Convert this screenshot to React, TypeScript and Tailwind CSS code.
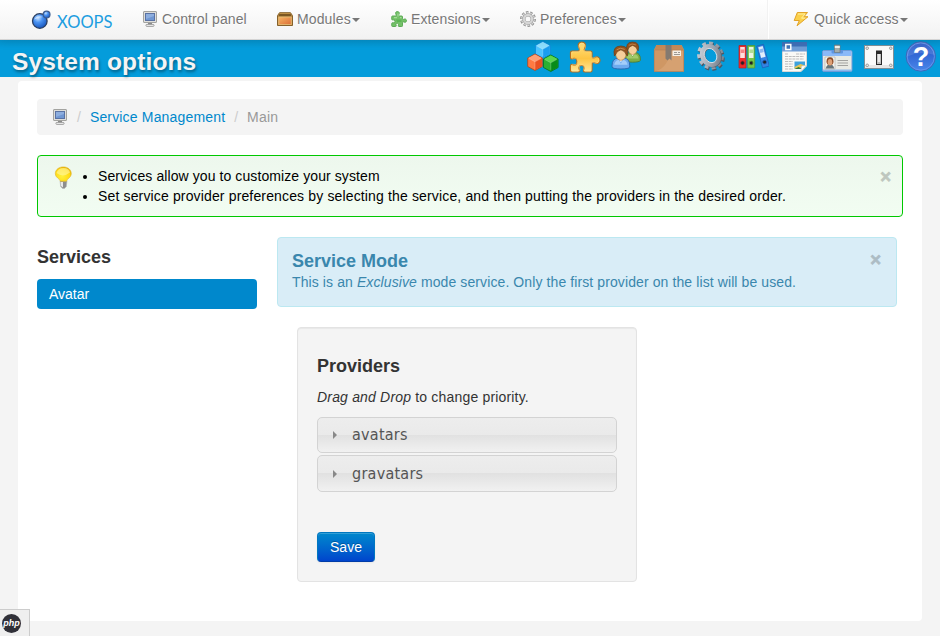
import React from "react";

function Monitor() {
  return (
    <svg width="16" height="16" viewBox="0 0 16 16" className="block">
      <rect x="1.500" y=".5" width="13" height="11" rx=".5" fill="#dededb" stroke="#a3a3a0" />
      <rect x="3.500" y="2.500" width="9" height="7" fill="#6f97d3" stroke="#5a72a3" />
      <path d="M4 3h8v2L4 8z" fill="#9ab8e4" opacity=".7" />
      <path d="M6 12h4v1.500H6z" fill="#8a8a8a" />
      <rect x="3.900" y="13.400" width="8.200" height="2" rx="1" fill="#eee" stroke="#8d8d8d" strokeWidth=".8" />
    </svg>
  );
}

const puzzlePath =
  "M1.500 11.500Q1.500 10 3 10h6q2.300-.3 1.200-2.500C8 4 9.500 1 12.800 1s5 3 2.800 6.500Q14.500 9.800 17 10h4.500Q23 10 23 11.500v4q.2 2.200 2.300 1.200C28.500 15 31 16.500 31 19.300s-2.500 4.200-5.700 2.500q-2.100-1-2.300 1.200v6.500q0 1.500-1.500 1.500H16q-2.300-.3-1.300-2.500c1-2.200 0-4-2.200-4s-3.200 1.800-2.200 4Q11.300 30.700 9 31H3q-1.500 0-1.500-1.500V25q.2-2.200 2.300-1.300 4.200 1.200 4.200-3t-4.200-3Q1.700 18.700 1.500 16.500z";

function GoldPuzzle() {
  return (
    <svg width="32" height="32" viewBox="0 0 32 32" className="block">
      <defs>
        <linearGradient id="gold" x1="0" y1="0" x2="0" y2="1">
          <stop offset="0" stopColor="#ffe27f" />
          <stop offset=".55" stopColor="#fdc544" />
          <stop offset="1" stopColor="#ffe79a" />
        </linearGradient>
      </defs>
      <path d={puzzlePath} fill="url(#gold)" stroke="#b5701e" strokeWidth="1.200" />
      <path d={puzzlePath} fill="none" stroke="#fff0b5" strokeWidth=".8" transform="translate(1.300 1.500) scale(.92)" opacity=".5" />
    </svg>
  );
}

function GreenPuzzle() {
  return (
    <svg width="16" height="16" viewBox="0 0 32 32" className="block">
      <path d={puzzlePath} fill="#74c168" stroke="#5cab56" strokeWidth="2" />
      <path d="M6 13h6m2-8v6m4 2h3" fill="none" stroke="#a3da97" strokeWidth="2.500" />
      <path d="M10 17h11v5H12z" fill="#5cb554" />
    </svg>
  );
}

function ModuleBox() {
  return (
    <svg width="16" height="16" viewBox="0 0 16 16" className="block">
      <defs>
        <linearGradient id="crate" x1="0" y1="0" x2="1" y2="1">
          <stop offset="0" stopColor="#f6b463" />
          <stop offset="1" stopColor="#dc6e38" />
        </linearGradient>
      </defs>
      <path d="M2.500 1.700h11l2 3v9.800H.5V4.700z" fill="#c99849" stroke="#85602b" />
      <path d="M2.300 3h11.400l1 2.500H1.300z" fill="#7c5722" />
      <rect x="1.800" y="6" width="12.400" height="7.500" fill="url(#crate)" stroke="#e5bd79" strokeWidth=".8" />
    </svg>
  );
}

function NavGear() {
  return (
    <svg width="16" height="16" viewBox="0 0 16 16" className="block">
      <circle cx="8" cy="8" r="6.600" fill="none" stroke="#8f8f8f" strokeWidth="2.600" pathLength="20" strokeDasharray="1.200 .8" />
      <circle cx="8" cy="8" r="6.100" fill="none" stroke="#d2d2d2" strokeWidth="2" pathLength="20" strokeDasharray=".8 1.200" strokeDashoffset="-.2" />
      <circle cx="8" cy="8" r="4.100" fill="none" stroke="#9d9d9d" strokeWidth="3.200" />
      <circle cx="8" cy="8" r="4.100" fill="none" stroke="#d6d6d6" strokeWidth="2.200" />
    </svg>
  );
}

function Bolt() {
  return (
    <svg width="16" height="16" viewBox="0 0 16 16" className="-ml-px mr-px block">
      <path d="M4.300 1.500h10.200L11 5.700h4L4 14.800l2.300-5.300H1.200z" fill="#fbd04a" stroke="#e2a32a" strokeLinejoin="round" />
      <path d="M5 3h7L8.500 7.200h3.700" fill="none" stroke="#fff0a0" />
    </svg>
  );
}

function Logo() {
  return (
    <div className="flex h-5 w-[82px] items-center">
      <svg width="20" height="20" viewBox="0 0 20 20" className="block shrink-0">
        <defs>
          <radialGradient id="orb" cx=".38" cy=".3" r=".75">
            <stop offset="0" stopColor="#c4e0ff" />
            <stop offset=".4" stopColor="#4a93f2" />
            <stop offset="1" stopColor="#1450b8" />
          </radialGradient>
        </defs>
        <circle cx="8.800" cy="11" r="7.300" fill="url(#orb)" stroke="#2b3f60" strokeWidth="1.300" />
        <path d="M3 9.500Q6 4.500 12 7 8 7 3 9.500" fill="#d7e9ff" opacity=".7" />
        <circle cx="15.600" cy="4.600" r="3.400" fill="url(#orb)" stroke="#3b5c90" strokeWidth="1.200" />
      </svg>
      <div className="mt-[3px] ml-[6px] text-[17px] leading-5 text-[#1c9de0]" style={{ fontFamily: "Lato, sans-serif" }}>
        <span className="inline-block origin-left scale-x-[0.97]">XOOPS</span>
      </div>
    </div>
  );
}

function Caret() {
  return <span className="mt-[1px] ml-[1.500px] h-0 w-0 border-x-4 border-t-4 border-x-transparent border-t-[#777]" />;
}

function NavItem({ icon, label, caret = true }: { icon: React.ReactNode; label: string; caret?: boolean }) {
  return (
    <div className="flex h-5 items-center tracking-[0.12px] text-[#777] [text-shadow:0_1px_0_#fff]">
      {icon}
      <span className="ml-1 whitespace-nowrap">{label}</span>
      {caret && <Caret />}
    </div>
  );
}

function Cubes() {
  const cube = (x: number, y: number, top: string, left: string, right: string, edge: string) => (
    <g transform={`translate(${x} ${y})`}>
      <path d="M8 .5l7.300 4v8.500l-7.300 4-7.300-4V4.500z" fill={left} stroke={edge} strokeWidth=".8" strokeLinejoin="round" />
      <path d="M8 .9l6.700 3.700L8 8.300 1.300 4.600z" fill={top} />
      <path d="M8 8.300l6.900-3.700v8.200L8 16.600z" fill={right} />
      <path d="M2 5l6 3.300L14 5M8 8.300v7" fill="none" stroke="#fff" opacity=".3" strokeWidth=".8" />
    </g>
  );
  return (
    <svg width="32" height="32" viewBox="0 0 32 32" className="block">
      {cube(7.800, 0, "#8fe0ff", "#4cc4ff", "#1a9df0", "#1288dc")}
      {cube(0, 12.500, "#ffa077", "#ff7a42", "#ea5122", "#b3441c")}
      {cube(15.800, 13.500, "#5bd64d", "#2bb032", "#088c18", "#066e16")}
    </svg>
  );
}

function Users() {
  const person = (x: number, y: number, s: number, shirt: string, light: string, edge: string) => (
    <g transform={`translate(${x} ${y}) scale(${s})`}>
      <path d="M.8 20.500q0-6.500 6-7.500h6.400q6 1 6 7.500v2q-1 2-9.200 2t-9.200-2z" fill={shirt} stroke={edge} />
      <path d="M3 20q1-5 5-5l2 4 2-4q4 0 5 5z" fill={light} opacity=".7" />
      <path d="M7.500 13l2.500 4.500L12.500 13z" fill="#fff" />
      <path d="M4.800 6q0-4 5.200-4t5.200 4v5q-1.700 4.500-5.200 4.500T4.800 11z" fill="#f6cf9b" stroke="#b07838" strokeWidth=".6" />
      <path d="M3.300 11Q.8.500 10 .5t6.700 10.500L15 8.500q-.5-2.500-5-4-4.500 1.500-5 4z" fill="#94541f" stroke="#6d3b12" strokeWidth=".7" />
      <path d="M5.500 4.500Q9 1.500 14 4" stroke="#c98b50" fill="none" />
    </g>
  );
  return (
    <svg width="32" height="32" viewBox="0 0 32 32" className="block overflow-visible">
      {person(13.200, .6, .84, "#7fae46", "#b1d67c", "#4d7a2c")}
      {person(.3, 4.500, .96, "#6fabef", "#b9dbff", "#2b67b0")}
    </svg>
  );
}

function Package() {
  return (
    <svg width="32" height="32" viewBox="0 0 32 32" className="block">
      <path d="M3.500 4h25L31 9v21.500H1V9z" fill="#d39a67" />
      <path d="M3.500 4h25L31 9H1z" fill="#c48a58" />
      <path d="M1.400 9h29.200v21.500H1.400z" fill="#cf9764" stroke="#b5825a" strokeWidth=".7" />
      <path d="M3 30Q14 27 18 10h12v20z" fill="#deac7e" opacity=".5" />
      <path d="M12.500 4h6v15.500l-2-2-2 2-2-2z" fill="#857a70" />
      <path d="M19.500 9.500h8.500v5.500h-8.500z" fill="#f4eee5" />
      <path d="M21 11.500h3m-3 2h6m-2-2h2" stroke="#9c9891" />
    </svg>
  );
}

function BigGear() {
  return (
    <svg width="32" height="32" viewBox="0 0 32 32" className="block">
      <defs>
        <linearGradient id="steel" x1="0" y1="0" x2="1" y2="1">
          <stop offset="0" stopColor="#c9d0d9" />
          <stop offset=".5" stopColor="#a3abb6" />
          <stop offset="1" stopColor="#737b87" />
        </linearGradient>
      </defs>
      <g transform="translate(2 1.300)">
        <ellipse cx="14.300" cy="14.500" rx="11.300" ry="12.600" fill="none" stroke="#4f5763" strokeWidth="3.600" pathLength="22" strokeDasharray="1.100 .9" transform="rotate(-30 14.300 14.500)" />
      </g>
      <g transform="translate(.5 0) rotate(-30 15 14.500)">
        <ellipse cx="15" cy="14.500" rx="11.300" ry="12.600" fill="none" stroke="url(#steel)" strokeWidth="3.600" pathLength="22" strokeDasharray="1.100 .9" />
        <ellipse cx="15.500" cy="15.300" rx="8" ry="9.500" fill="none" stroke="#5d6571" strokeWidth="4.600" />
        <ellipse cx="15" cy="14.500" rx="8.200" ry="9.700" fill="none" stroke="url(#steel)" strokeWidth="4.200" />
        <ellipse cx="15" cy="14.500" rx="5.900" ry="7.500" fill="none" stroke="#e6ebf0" strokeWidth=".8" />
      </g>
    </svg>
  );
}

function Binders() {
  const binder = (x: number, color: string, dark: string, rotate = 0) => (
    <g transform={`translate(${x} 4) rotate(${rotate} 3 0)`}>
      <path d="M.5.5h7v22.500h-7z" fill={color} stroke={dark} strokeWidth=".7" />
      <path d="M1.700 2h4.600v11H1.700z" fill="#fff" opacity=".85" />
      <path d="M2.200 4.500h3.600v3.500H2.200z" fill={color} opacity=".5" />
      <circle cx="4" cy="18" r="1.900" fill="#202228" stroke={dark} strokeWidth=".8" />
    </g>
  );
  return (
    <svg width="32" height="32" viewBox="0 0 32 32" className="block">
      {binder(1.500, "#ee2c2c", "#b71c22")}
      {binder(10.200, "#78c648", "#55982f")}
      {binder(19, "#3584e4", "#1d61b8", -15)}
    </svg>
  );
}

function News() {
  return (
    <svg width="32" height="32" viewBox="0 0 32 32" className="block">
      <path d="M3.500 1.500h24V25L22 30.500H3.500z" fill="#f9f9f6" stroke="#d8d8d5" />
      <path d="M3 1h25v9.500H3z" fill="#6f9dd6" />
      <path d="M3 1h25v4.500H3z" fill="#3f70b8" />
      <path d="M6.800 3.500h5v5h-5z" fill="#3f74b8" stroke="#fff" strokeWidth="1.500" />
      <path d="M6 13h3m8 0h9M6 15.500h19M6 18h19M6 20.500h8m-8 2.500h8m-8 2.500h8m-8 2.500h8" stroke="#bdbdbd" strokeWidth="1.200" strokeDasharray="3 .7" />
      <path d="M15.500 20.500h10.500v7H15.500z" fill="#3fa2dd" />
      <path d="M15.500 26l6-3 4.500 1.500v3H15.500z" fill="#e9c551" />
      <path d="M15.500 28l4-2 4 2z" fill="#327a3b" />
      <path d="M22 30.500l.5-5.500 5-.5z" fill="#fff" stroke="#bbb" strokeWidth=".5" />
    </svg>
  );
}

function IdBadge() {
  return (
    <svg width="32" height="32" viewBox="0 0 32 32" className="block">
      <rect x="1.500" y="9.500" width="29.500" height="21" rx="1.500" fill="#e9eae4" stroke="#6e9bd7" />
      <path d="M2 10h28.500v5H2z" fill="#8bb9f8" />
      <path d="M2 28.500h28.500V30H2z" fill="#8db9ed" />
      <rect x="10.500" y="9" width="11.500" height="3.500" rx="1" fill="#5f95e0" />
      <path d="M13.500 4h5.500v7.500h-5.500z" fill="#a5adab" stroke="#707a7c" strokeWidth=".7" />
      <path d="M13.800 5h5v2h-5z" fill="#eef2ed" />
      <path d="M4 16h10v12H4z" fill="#f6f6f0" stroke="#aaa" strokeWidth=".6" />
      <path d="M4.800 27.500q.7-4 4.200-4t4.200 4z" fill="#66757b" />
      <ellipse cx="9" cy="20.300" rx="3.500" ry="4" fill="#8c4a26" />
      <ellipse cx="9" cy="21.300" rx="2.300" ry="3.200" fill="#dda177" />
      <path d="M16.500 19.500H27m-10.500 2.500H27m-10.500 2.500H27" stroke="#a3a3a0" />
    </svg>
  );
}

function SwitchPlate() {
  return (
    <svg width="32" height="32" viewBox="0 0 32 32" className="block">
      <rect x="1.500" y="4.500" width="29" height="23" fill="#fafafa" stroke="#7f8f97" />
      <path d="M2 24h28v3H2z" fill="#e6e6e6" />
      {[4.200, 27.800].map((x) => [7.200, 24.300].map((y) => <circle key={`${x}-${y}`} cx={x} cy={y} r="1.300" fill="#eee" stroke="#888" strokeWidth=".8" />))}
      <path d="M13 9.500h6v14.500h-6z" fill="#2a2a2a" />
      <path d="M14.200 13h3.600v10h-3.600z" fill="#e9e9e9" />
      <path d="M14.200 21h3.600v2h-3.600z" fill="#bbb" />
    </svg>
  );
}

function Help() {
  return (
    <svg width="32" height="32" viewBox="0 0 32 32" className="block">
      <defs>
        <linearGradient id="helpBlue" x1="0" y1="0" x2="0" y2="1">
          <stop offset="0" stopColor="#1f50c4" />
          <stop offset="1" stopColor="#4a86ea" />
        </linearGradient>
      </defs>
      <circle cx="15.800" cy="15.500" r="14.700" fill="url(#helpBlue)" stroke="#3d6ab8" />
      <circle cx="15.800" cy="15.500" r="13.600" fill="none" stroke="#6a98ed" strokeWidth=".8" />
      <path d="M2 16Q14 9 30 14A14 14 0 0 0 2 16" fill="#fff" opacity=".12" />
      <text x="16" y="25" textAnchor="middle" fill="#fff" fontSize="27" fontWeight="700" fontFamily="Liberation Sans">?</text>
    </svg>
  );
}

function Bulb() {
  return (
    <svg width="24" height="24" viewBox="0 0 24 24" className="block">
      <defs>
        <radialGradient id="glow" cx=".42" cy=".65" r=".65">
          <stop offset="0" stopColor="#fff13d" />
          <stop offset=".75" stopColor="#ffda13" />
          <stop offset="1" stopColor="#e6b000" />
        </radialGradient>
      </defs>
      <path d="M9 15h7l-.7 5.500-1.800 2h-2l-1.800-2z" fill="#8d8d8d" stroke="#b5b5b5" strokeWidth=".6" />
      <path d="M9.500 16H12v5.500l-2-1.500z" fill="#e8e8e8" />
      <path d="M4.300 7.800C4.300 3.500 8 .9 12.300.9s8 2.600 8 6.900c0 3.800-4 4.600-4.800 7.400h-6C8.500 12.400 4.300 11.600 4.300 7.800z" fill="url(#glow)" stroke="#dfb42c" strokeWidth=".6" />
      <path d="M5.500 7Q7 2 12.500 1.900T19 6.500Q12 12 5.500 7z" fill="#fff9b3" opacity=".55" />
    </svg>
  );
}

function Close() {
  return <span className="block pt-[0.5px] text-[18.500px] leading-5 font-bold text-black opacity-20 [-webkit-text-stroke:0.8px_#000]">×</span>;
}

function ProviderRow({ name, height }: { name: string; height: string }) {
  return (
    <div className={`${height} mb-[2px] flex items-center rounded-[5px] border border-[#d3d3d3] bg-[linear-gradient(#ededed_0%,#eaeaea_49%,#e1e1e1_50%,#f1f1f1_100%)] pl-[15px] text-[#555]`}>
      <span className="h-0 w-0 border-y-4 border-l-4 border-y-transparent border-l-[#888]" />
      <span className="ml-[15px] text-[16px] leading-5 tracking-[0.25px]" style={{ fontFamily: "'DejaVu Sans Condensed', 'DejaVu Sans', sans-serif", fontStretch: "condensed" }}>{name}</span>
    </div>
  );
}

export default function App() {
  return (
    <div className="relative h-[636px] w-[940px] overflow-hidden bg-[#f4f4f4] text-[14px] leading-5 text-[#333]" style={{ fontFamily: "'Liberation Sans', Arial, sans-serif" }}>
      <nav className="relative flex h-10 border-b border-[#d4d4d4] bg-linear-to-b from-white to-[#f2f2f2] pt-[9px] shadow-[0_1px_10px_rgba(0,0,0,0.1)]">
        <div className="w-[142px] pt-px pl-[31px]"><Logo /></div>
        <div className="w-[135px]"><NavItem icon={<Monitor />} label="Control panel" caret={false} /></div>
        <div className="w-[114px]"><NavItem icon={<ModuleBox />} label="Modules" /></div>
        <div className="w-[129px]"><NavItem icon={<GreenPuzzle />} label="Extensions" /></div>
        <div className="w-[248px]"><NavItem icon={<NavGear />} label="Preferences" /></div>
        <div className="-mt-[9px] h-[39px] border-l border-white pt-[9px] pl-[25px] shadow-[-1px_0_0_#f2f2f2]"><NavItem icon={<Bolt />} label="Quick access" /></div>
      </nav>

      <header className="flex h-[37px] justify-between bg-[linear-gradient(#0591cb_0,#049cdb_8px)] pr-[3px] pl-3">
        <h1 className="pt-[7px] text-[24.500px] leading-[30px] font-bold tracking-[0.14px] text-[#f4f4f4] [text-shadow:1px_2px_3px_rgba(0,0,0,0.4)]">System options</h1>
        <div className="flex gap-[10px] pt-px">
          <Cubes />
          <GoldPuzzle />
          <Users />
          <Package />
          <BigGear />
          <Binders />
          <News />
          <IdBadge />
          <SwitchPlate />
          <Help />
        </div>
      </header>

      <main className="mx-[18px] mt-1 h-[540px] rounded-[4px] bg-white px-[19px] pt-[18px]">
        <div className="flex h-9 items-center rounded-[4px] bg-[#f4f4f4] pl-[15px]">
          <Monitor />
          <span className="ml-[9px] text-[#ccc]">/</span>
          <a className="ml-[9px] tracking-[0.167px] text-[#0088cc]">Service Management</a>
          <span className="ml-[9px] text-[#ccc]">/</span>
          <span className="ml-[9px] tracking-[0.2px] text-[#999]">Main</span>
        </div>

        <section className="mt-5 flex h-[62px] rounded-[4px] border border-[#00c800] bg-linear-to-b from-[#edf7ed] to-[#f2fdf2] pt-[10px] text-black">
          <div className="pl-[13px]"><Bulb /></div>
          <ul className="ml-[23px] list-disc">
            <li className="tracking-[0.09px]">Services allow you to customize your system</li>
            <li className="tracking-[0.147px]">Set service provider preferences by selecting the service, and then putting the providers in the desired order.</li>
          </ul>
          <div className="mr-[11px] ml-auto"><Close /></div>
        </section>

        <div className="mt-5 flex">
          <aside className="w-[220px]">
            <h2 className="pt-[10px] text-[18px] leading-5 font-bold">Services</h2>
            <div className="mt-3 h-[30px] rounded-[4px] bg-[#0088cc] px-3 py-[5px] text-white">Avatar</div>
          </aside>
          <div className="ml-5 w-[620px]">
            <section className="flex h-[70px] justify-between rounded-[4px] border border-[#bce8f1] bg-[#d9edf7] pt-[13px] pr-[15px] pl-[14px] text-[#3a87ad]">
              <div>
                <h2 className="text-[18px] leading-5 font-bold">Service Mode</h2>
                <p className="mt-px tracking-[0.1px]">This is an <i>Exclusive</i> mode service. Only the first provider on the list will be used.</p>
              </div>
              <div className="-mt-[2px]"><Close /></div>
            </section>
            <section className="mt-5 ml-5 h-[255px] w-[340px] rounded-[4px] border border-[#e3e3e3] bg-[#f4f4f4] px-[19px] pt-[28px] shadow-[inset_0_1px_1px_rgba(0,0,0,0.05)]">
              <h2 className="text-[18px] leading-5 font-bold">Providers</h2>
              <p className="mt-[11px] mb-[10px] tracking-[0.18px]"><i>Drag and Drop</i> to change priority.</p>
              <ProviderRow name="avatars" height="h-9" />
              <ProviderRow name="gravatars" height="h-[37px]" />
              <button className="mt-[40px] block h-[30px] w-[58px] rounded-[4px] border border-[#0077c0] border-b-[#003ca8] bg-linear-to-b from-[#0088cc] to-[#0044cc] text-white shadow-[inset_0_1px_0_rgba(255,255,255,0.2),0_1px_2px_rgba(0,0,0,0.05)] [text-shadow:0_-1px_0_rgba(0,0,0,0.25)]">Save</button>
            </section>
          </div>
        </div>
      </main>

      <div className="absolute bottom-0 left-0 flex h-[27px] w-[30px] items-center border-t border-r border-[#ccc] bg-[#efefef] pl-[2px]">
        <div className="flex h-[19px] w-[19px] items-center justify-center rounded-full bg-[#303038]">
          <span className="text-[9px] leading-none font-bold text-white italic">php</span>
        </div>
      </div>
    </div>
  );
}
